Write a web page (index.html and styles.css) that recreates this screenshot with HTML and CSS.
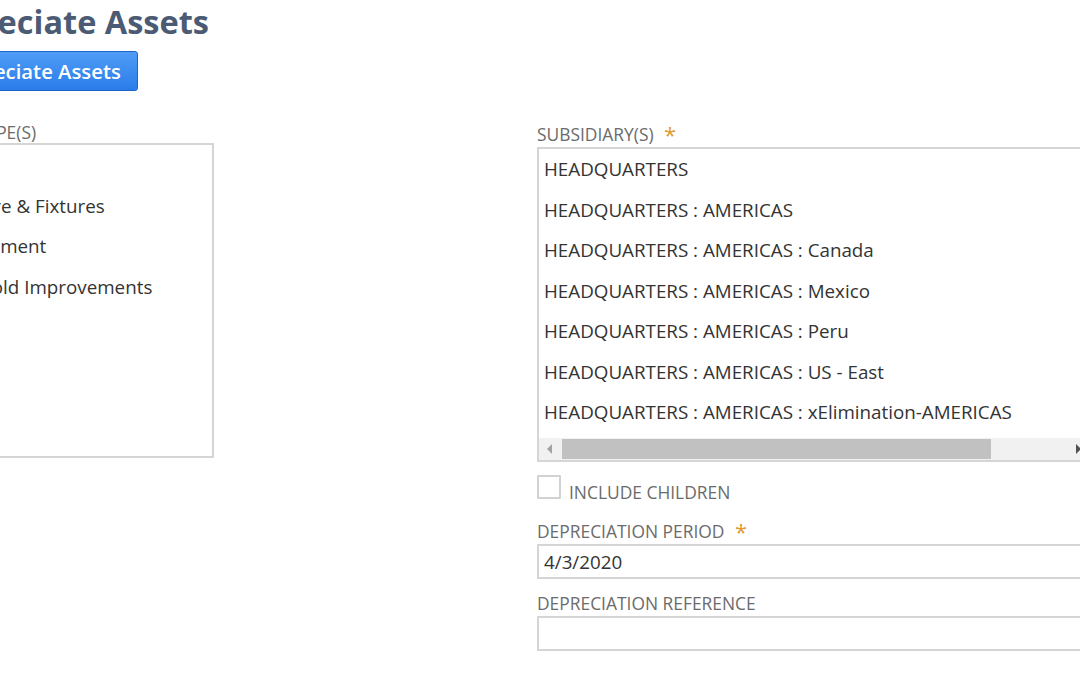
FILE: index.html
```html
<!DOCTYPE html>
<html>
<head>
<meta charset="utf-8">
<link rel="stylesheet" href="styles.css">
</head>
<body>
<div class="page">
  <h1 class="title">Depreciate Assets</h1>
  <div class="actions"><button class="btn-primary">Depreciate Assets</button></div>
  <div class="form">
    <div class="col col-left">
      <div class="field">
        <div class="label">Asset Type(s)</div>
        <div class="listbox listbox-left">
          <div class="opt">Land</div>
          <div class="opt">Furniture &amp; Fixtures</div>
          <div class="opt">IT Equipment</div>
          <div class="opt">Leasehold Improvements</div>
        </div>
      </div>
    </div>
    <div class="col col-right">
      <div class="field">
        <div class="label">Subsidiary(s) <span class="req">*</span></div>
        <div class="listbox listbox-right">
          <div class="opts">
            <div class="opt">HEADQUARTERS</div>
            <div class="opt">HEADQUARTERS : AMERICAS</div>
            <div class="opt">HEADQUARTERS : AMERICAS : Canada</div>
            <div class="opt">HEADQUARTERS : AMERICAS : Mexico</div>
            <div class="opt">HEADQUARTERS : AMERICAS : Peru</div>
            <div class="opt">HEADQUARTERS : AMERICAS : US - East</div>
            <div class="opt">HEADQUARTERS : AMERICAS : xElimination-AMERICAS</div>
          </div>
          <div class="hscroll">
            <span class="arrow arrow-left"></span>
            <span class="thumb"></span>
            <span class="arrow arrow-right"></span>
          </div>
        </div>
      </div>
      <div class="check-row">
        <span class="checkbox"></span>
        <span class="label check-label">Include Children</span>
      </div>
      <div class="field">
        <div class="label">Depreciation Period <span class="req">*</span></div>
        <div class="input">4/3/2020</div>
      </div>
      <div class="field">
        <div class="label">Depreciation Reference</div>
        <div class="input"></div>
      </div>
    </div>
  </div>
</div>
</body>
</html>
```
FILE: styles.css
```css
html, body {
  margin: 0;
  padding: 0;
  background: #ffffff;
  overflow: hidden;
}
body {
  font-family: "Open Sans", "Liberation Sans", sans-serif;
  color: #333333;
  width: 1080px;
  height: 675px;
}
.page {
  margin-left: -77px;
  width: 1400px;
}
.title {
  margin: 0 0 0 -4px;
  padding-top: 2px;
  font-size: 32.5px;
  line-height: 40px;
  font-weight: 700;
  color: #4b5b74;
}
.actions {
  margin-top: 9px;
  margin-left: 6px;
}
.btn-primary {
  display: block;
  font-family: "Open Sans", "Liberation Sans", sans-serif;
  font-size: 20.3px;
  font-weight: 600;
  color: #ffffff;
  height: 40px;
  padding: 0 16px;
  border: 1px solid #1c64c9;
  border-radius: 3px;
  background: linear-gradient(#4f9df7, #2a7ce9);
  line-height: 36px;
}
.form {
  display: grid;
  grid-template-columns: 614px 1fr;
  margin-top: 30px;
}
.label {
  font-size: 17.4px;
  line-height: 22px;
  color: #6b6b6b;
  text-transform: uppercase;
  white-space: nowrap;
}
.col-right {
  padding-top: 2px;
}
.col-right .label {
  margin-bottom: 2px;
}
.req {
  color: #e09b2d;
  font-size: 22px;
  margin-left: 6px;
  line-height: 20px;
  vertical-align: -2px;
}
.listbox {
  border: 2px solid #d5d5d5;
  height: 311px;
  overflow: hidden;
}
.listbox-left {
  width: 287px;
}
.listbox-right {
  width: 700px;
  display: flex;
  flex-direction: column;
}
.opts {
  flex: 1;
}
.opt {
  font-size: 18.8px;
  line-height: 40.5px;
  padding-left: 5px;
  color: #333333;
  white-space: nowrap;
}
.hscroll {
  height: 22px;
  background: #f1f1f1;
  display: flex;
  align-items: center;
}
.arrow {
  width: 0;
  height: 0;
  border-top: 5px solid transparent;
  border-bottom: 5px solid transparent;
}
.arrow-left {
  border-right: 5px solid #a3a3a3;
  margin-left: 8px;
  margin-right: 10px;
}
.thumb {
  width: 429px;
  height: 20px;
  background: #c1c1c1;
}
.arrow-right {
  border-left: 5px solid #505050;
  margin-left: 85px;
}
.check-row {
  display: flex;
  align-items: flex-start;
  margin-top: 13px;
  gap: 8px;
}
.checkbox {
  width: 20px;
  height: 20px;
  border: 2px solid #d2d2d2;
  border-radius: 1px;
  display: block;
}
.col-right .check-label {
  margin-top: 6px;
  margin-bottom: 0;
}
.check-row + .field {
  margin-top: 17px;
}
.field + .field {
  margin-top: 13px;
}
.input {
  width: 700px;
  height: 31px;
  border: 2px solid #d5d5d5;
  font-size: 18.8px;
  line-height: 32px;
  padding-left: 5px;
  color: #333333;
}
```
